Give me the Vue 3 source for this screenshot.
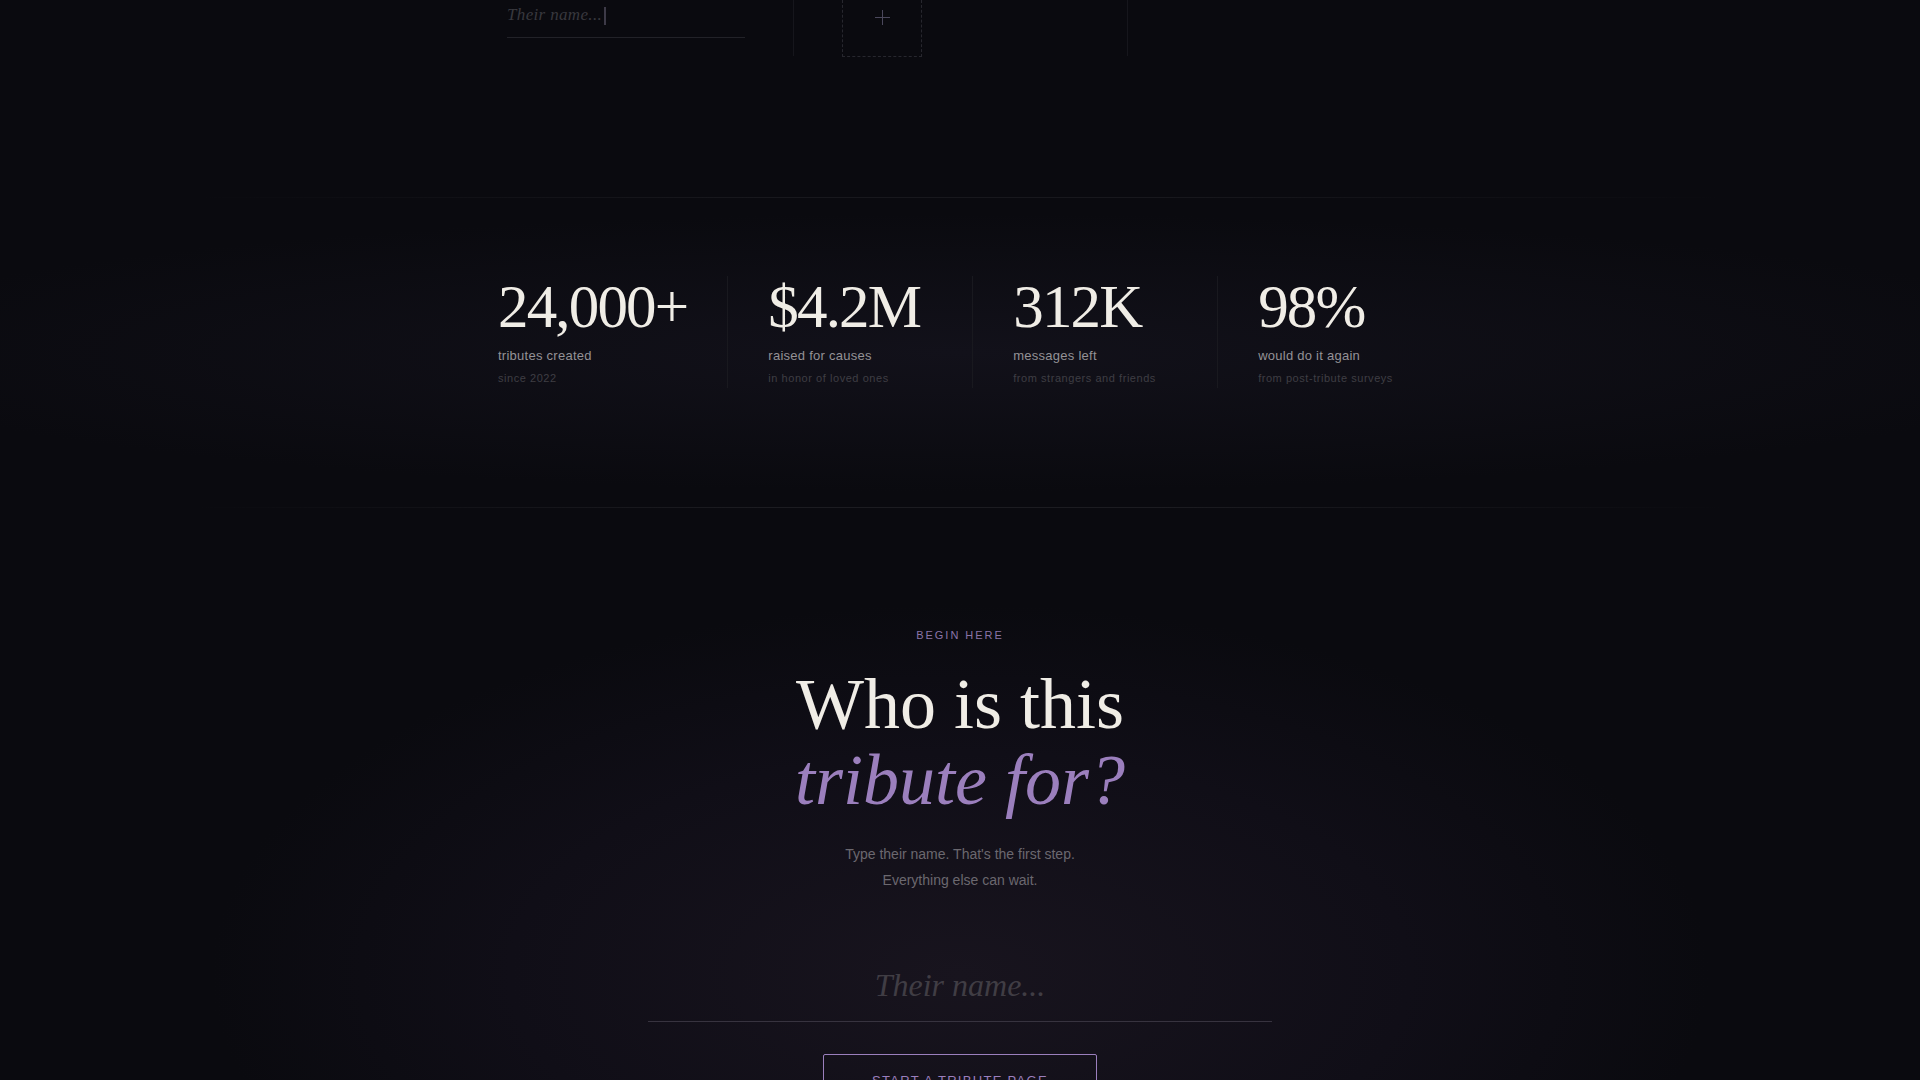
<script setup>
import { ref } from 'vue'

const previewName = ref('')
const tributeName = ref('')

const stats = [
  { value: '24,000+', label: 'tributes created', note: 'since 2022' },
  { value: '$4.2M', label: 'raised for causes', note: 'in honor of loved ones' },
  { value: '312K', label: 'messages left', note: 'from strangers and friends' },
  { value: '98%', label: 'would do it again', note: 'from post-tribute surveys' },
]
</script>

<template>
  <main class="page">
    <section class="steps" aria-label="How it works">
      <div class="step">
        <label class="name-field">
          <input v-model="previewName" class="name-input" type="text" placeholder="Their name..." aria-label="Name preview" />
          <span class="caret"></span>
        </label>
      </div>
      <div class="step">
        <button class="add-photo" type="button" aria-label="Add a photo">
          <svg width="16" height="16" viewBox="0 0 16 16" aria-hidden="true">
            <path d="M8.5 1v15M1 8.5h15" fill="none" stroke="currentColor" />
          </svg>
        </button>
      </div>
      <div class="step"></div>
    </section>

    <section class="stats-band">
      <dl class="stats">
        <div v-for="stat in stats" :key="stat.label" class="stat">
          <dd class="value">{{ stat.value }}</dd>
          <dt class="label">{{ stat.label }}</dt>
          <dd class="note">{{ stat.note }}</dd>
        </div>
      </dl>
    </section>

    <section class="begin">
      <p class="eyebrow">Begin here</p>
      <h2 class="title">Who is this<br /><em>tribute for?</em></h2>
      <p class="lead">Type their name. That's the first step.<br />Everything else can wait.</p>
      <form class="form" @submit.prevent>
        <input v-model="tributeName" class="tribute-input" type="text" placeholder="Their name..." aria-label="Their name" />
        <button class="start" type="submit">Start a tribute page</button>
      </form>
    </section>
  </main>
</template>

<style>
body {
  margin: 0;
  background: #0a0a0f;
}
</style>

<style scoped>
.page {
  height: 100vh;
  overflow: hidden;
  background: #0a0a0f;
  color: #f0ede6;
  font-family: "Liberation Sans", Arial, sans-serif;
}

.steps {
  display: grid;
  grid-template-columns: repeat(3, 1fr);
  max-width: 1002px;
  margin: 0 auto 141px;
}

.step {
  height: 56px;
  padding: 0 48px;
}

.step + .step {
  border-left: 1px solid #16161c;
}

.name-field {
  display: flex;
  align-items: flex-start;
  position: relative;
  height: 37px;
  border-bottom: 1px solid #222228;
}

.name-input {
  width: 100%;
  height: 30px;
  padding: 0;
  border: 0;
  outline: 0;
  background: none;
  color: #f0ede6;
  font: italic 17px/30px "Liberation Serif", "Times New Roman", serif;
  letter-spacing: 0.02em;
}

.name-input::placeholder {
  color: #38383e;
  opacity: 1;
}

.caret {
  position: absolute;
  top: 7px;
  left: 97px;
  width: 2px;
  height: 18px;
  background: #3d3a47;
}

.add-photo {
  display: flex;
  justify-content: center;
  width: 80px;
  height: 57px;
  padding: 9px 0 0;
  border: 1px dashed #27272e;
  border-top: 0;
  background: none;
  color: #4b485c;
}

.stats-band {
  padding: 78px 48px 119px;
  border: 1px solid transparent;
  border-width: 1px 0;
  background:
    linear-gradient(90deg, transparent 10%, #18181d 40%, #18181d 60%, transparent 90%) top / 100% 1px no-repeat border-box,
    linear-gradient(90deg, transparent 10%, #1c1c21 40%, #1c1c21 60%, transparent 90%) bottom / 100% 1px no-repeat border-box,
    radial-gradient(ellipse 60% 45% at 50% 50%, #12111a, #0a0a0f) no-repeat;
}

.stats {
  display: flex;
  max-width: 924px;
  margin: 0 auto;
}

.stat {
  display: flex;
  flex: 1;
  flex-direction: column;
  padding: 0 40px;
}

.stat:first-child {
  padding-left: 0;
}

.stat:last-child {
  padding-right: 0;
}

.stat + .stat {
  border-left: 1px solid #19191f;
}

.value {
  margin: 0 0 11px;
  font: 61px/61px "Liberation Serif", "Times New Roman", serif;
  letter-spacing: -0.03em;
}

.label {
  margin-bottom: 6px;
  color: #949296;
  font-size: 13px;
  line-height: 16px;
  letter-spacing: 0.02em;
  white-space: nowrap;
}

.note {
  margin: 0 0 2px;
  color: #3f3e44;
  font-size: 11px;
  line-height: 16px;
  letter-spacing: 0.05em;
  white-space: nowrap;
}

.begin {
  display: flex;
  flex-direction: column;
  align-items: center;
  padding: 120px 48px 140px;
  background: radial-gradient(ellipse 39% 50% at 50% 63%, #18141e, #100e17 60%, #0a0a0f);
  text-align: center;
}

.eyebrow {
  margin: 0 0 24px;
  color: #8a74a8;
  font-size: 11px;
  line-height: 14px;
  letter-spacing: 0.18em;
  text-transform: uppercase;
}

.title {
  margin: 0 0 23px;
  font: 400 72px/76px "Liberation Serif", "Times New Roman", serif;
}

.title em {
  color: #9b7fbd;
}

.lead {
  margin: 0 0 56px;
  color: #6b686f;
  font-size: 14px;
  line-height: 26px;
}

.form {
  display: flex;
  flex-direction: column;
  align-items: center;
  gap: 32px;
  width: 100%;
  max-width: 624px;
}

.tribute-input {
  width: 100%;
  height: 72px;
  padding: 0;
  border: 0;
  border-bottom: 1px solid #37333f;
  border-radius: 0;
  outline: 0;
  background: none;
  color: #f0ede6;
  font: italic 32px/40px "Liberation Serif", "Times New Roman", serif;
  text-align: center;
}

.tribute-input::placeholder {
  color: #403d44;
  opacity: 1;
}

.start {
  padding: 18px 48px;
  border: 1px solid #9b7fbd;
  border-radius: 2px;
  background: none;
  color: #9b7fbd;
  font: 13px/16px "Liberation Sans", Arial, sans-serif;
  letter-spacing: 0.1em;
  text-transform: uppercase;
}
</style>
